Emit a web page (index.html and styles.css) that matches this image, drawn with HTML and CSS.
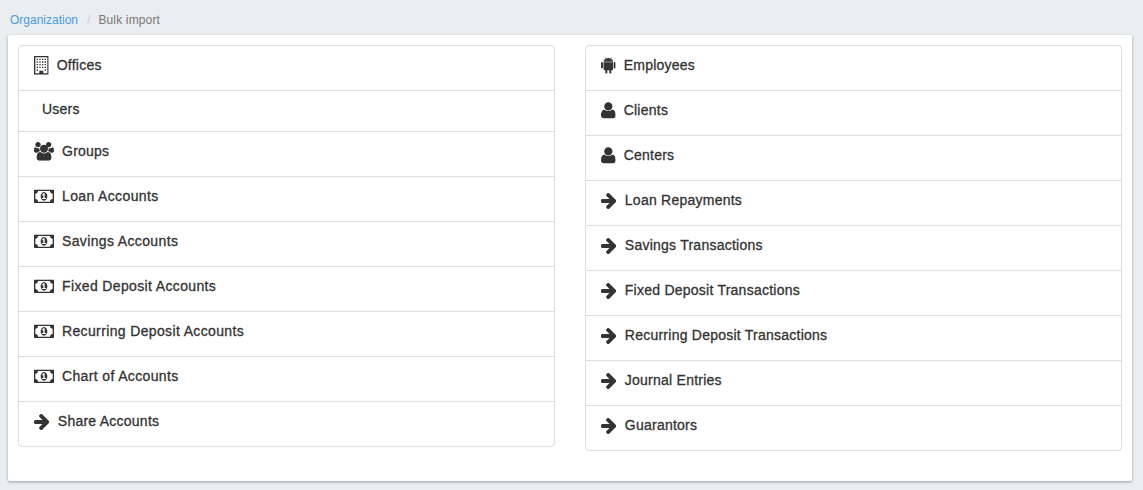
FILE: index.html
```html
<!DOCTYPE html>
<html lang="en">
<head>
<meta charset="utf-8">
<title>Bulk import</title>
<link rel="stylesheet" href="styles.css">
</head>
<body>
<svg class="sprite" aria-hidden="true">
  <symbol id="building" viewBox="0 0 1408 1792"><path fill-rule="evenodd" d="M64 0h1280q26 0 45 19t19 45v1664q0 26-19 45t-45 19H64q-26 0-45-19t-19-45V64q0-26 19-45t45-19zM128 128v1536h384v-224q0-13 9.500-22.500t22.500-9.500h320q13 0 22.500 9.500t9.500 22.500v224h384V128z"/><path d="M256 256h128v128H256zM512 256h128v128H512zM768 256h128v128H768zM1024 256h128v128h-128zM256 512h128v128H256zM512 512h128v128H512zM768 512h128v128H768zM1024 512h128v128h-128zM256 768h128v128H256zM512 768h128v128H512zM768 768h128v128H768zM1024 768h128v128h-128zM256 1024h128v128H256zM512 1024h128v128H512zM768 1024h128v128H768zM1024 1024h128v128h-128zM256 1280h128v128H256zM1024 1280h128v128h-128z"/></symbol>
  <symbol id="users" viewBox="0 0 1920 1792"><path d="M593 896q-162 5-265 128h-134q-82 0-138-40.500t-56-118.500q0-353 124-353 6 0 43.500 21t97.500 42.500 119 21.500q67 0 133-23-5 37-5 66 0 139 81 256zm1071 637q0 120-73 189.500t-194 69.500h-874q-121 0-194-69.500t-73-189.500q0-53 3.500-103.500t14-109 26.500-108.500 43-97.500 62-81 85.500-53.500 111.500-20q10 0 43 21.500t73 48 107 48 135 21.500 135-21.500 107-48 73-48 43-21.500q61 0 111.500 20t85.500 53.500 62 81 43 97.500 26.500 108.500 14 109 3.500 103.500zm-1024-1277q0 106-75 181t-181 75-181-75-75-181 75-181 181-75 181 75 75 181zm704 384q0 159-112.500 271.500t-271.500 112.500-271.500-112.500-112.500-271.500 112.500-271.500 271.500-112.500 271.500 112.500 112.500 271.500zm576 225q0 78-56 118.500t-138 40.500h-134q-103-123-265-128 81-117 81-256 0-29-5-66 66 23 133 23 59 0 119-21.500t97.500-42.500 43.500-21q124 0 124 353zm-256-609q0 106-75 181t-181 75-181-75-75-181 75-181 181-75 181 75 75 181z"/></symbol>
  <symbol id="money" viewBox="0 0 1920 1792"><path d="M768 1152h384v-96h-128v-448h-114l-148 137 77 80q42-37 55-57h2v288h-128v96zm512-256q0 70-21 142t-59.500 134-101.500 101-138 39-138-39-101.500-101-59.500-134-21-142 21-142 59.500-134 101.500-101 138-39 138 39 101.500 101 59.500 134 21 142zm512 256v-512q-106 0-181-75t-75-181h-1152q0 106-75 181t-181 75v512q106 0 181 75t75 181h1152q0-106 75-181t181-75zm128-832v1152q0 26-19 45t-45 19h-1792q-26 0-45-19t-19-45v-1152q0-26 19-45t45-19h1792q26 0 45 19t19 45z" fill-rule="evenodd"/></symbol>
  <symbol id="arrow" viewBox="0 0 1472 1792"><path d="M1472 960q0 54-37 91l-651 651q-39 37-91 37-51 0-90-37l-75-75q-38-38-38-91t38-91l293-293h-704q-52 0-84.500-37.500t-32.500-90.500v-128q0-53 32.500-90.500t84.500-37.500h704l-293-294q-38-36-38-90t38-90l75-75q38-38 90-38 53 0 91 38l651 651q37 35 37 90z"/></symbol>
  <symbol id="user" viewBox="0 0 1408 1792"><path d="M1408 1405q0 120-73 189.500t-194 69.500H267q-121 0-194-69.500T0 1405q0-53 3.500-103.500t14-109T44 1084t43-97.500 62-81 85.500-53.500T346 832q10 0 43 21.500t73 48 107 48T704 971t135-21.500 107-48 73-48 43-21.500q61 0 111.500 20t85.500 53.500 62 81 43 97.500 26.500 108.500 14 109 3.500 103.500zM1104 512q0 164-117 281T704 912 421 793 304 512t117-283T704 112t283 117 117 283z"/></symbol>
  <symbol id="android" viewBox="0 0 1408 1792"><path fill-rule="evenodd" d="M243 557q0-190 212-306L384 120q-10-22 8-30 14-6 22 8l73 132q103-46 217-46t217 46l73-132q8-14 22-8 18 8 8 30l-71 131q212 116 212 306zM493 429a39 39 0 1 0 0-78 39 39 0 0 0 0 78zm422 0a39 39 0 1 0 0-78 39 39 0 0 0 0 78z"/><path d="M247 606h914v666q0 100-100 100h-73v227q0 93-93 93t-93-93v-227H606v227q0 93-93 93t-93-93v-227h-72q-101 0-101-100zM93 587q93 0 93 93v430q0 93-93 93t-93-93V680q0-93 93-93zM1315 587q93 0 93 93v430q0 93-93 93t-93-93V680q0-93 93-93z"/></symbol>
</svg>
<nav class="breadcrumb"><a class="crumb-link">Organization</a><span class="divider">/</span><span class="current">Bulk import</span></nav>
<main class="panel">
  <div class="list">
    <a class="item"><svg class="icon narrow"><use href="#building"/></svg><span>Offices</span></a>
    <a class="item plain"><span>Users</span></a>
    <a class="item"><svg class="icon wide"><use href="#users"/></svg><span>Groups</span></a>
    <a class="item account"><svg class="icon wide"><use href="#money"/></svg><span>Loan Accounts</span></a>
    <a class="item account"><svg class="icon wide"><use href="#money"/></svg><span>Savings Accounts</span></a>
    <a class="item account"><svg class="icon wide"><use href="#money"/></svg><span>Fixed Deposit Accounts</span></a>
    <a class="item account"><svg class="icon wide"><use href="#money"/></svg><span>Recurring Deposit Accounts</span></a>
    <a class="item account"><svg class="icon wide"><use href="#money"/></svg><span>Chart of Accounts</span></a>
    <a class="item"><svg class="icon arrow"><use href="#arrow"/></svg><span>Share Accounts</span></a>
  </div>
  <div class="list">
    <a class="item"><svg class="icon narrow"><use href="#android"/></svg><span>Employees</span></a>
    <a class="item"><svg class="icon narrow"><use href="#user"/></svg><span>Clients</span></a>
    <a class="item"><svg class="icon narrow"><use href="#user"/></svg><span>Centers</span></a>
    <a class="item"><svg class="icon arrow"><use href="#arrow"/></svg><span>Loan Repayments</span></a>
    <a class="item"><svg class="icon arrow"><use href="#arrow"/></svg><span>Savings Transactions</span></a>
    <a class="item"><svg class="icon arrow"><use href="#arrow"/></svg><span>Fixed Deposit Transactions</span></a>
    <a class="item"><svg class="icon arrow"><use href="#arrow"/></svg><span>Recurring Deposit Transactions</span></a>
    <a class="item"><svg class="icon arrow"><use href="#arrow"/></svg><span>Journal Entries</span></a>
    <a class="item"><svg class="icon arrow"><use href="#arrow"/></svg><span>Guarantors</span></a>
  </div>
</main>
</body>
</html>
```

FILE: styles.css
```css
* { box-sizing: border-box; }
body {
  margin: 0;
  height: 490px;
  overflow: hidden;
  background: #eaeef1;
  color: #333;
  font-family: "Liberation Sans", Arial, sans-serif;
}
.sprite { display: none; }
.breadcrumb {
  display: flex;
  height: 35px;
  padding: 12px 10px 0;
  font-size: 12px;
  line-height: 16px;
  color: #777;
}
.crumb-link { color: #4a9ae0; }
.divider { padding: 0 8px 0 9px; color: #ccc; }
.current { letter-spacing: .15px; }
.panel {
  display: grid;
  grid-template-columns: 537px 537px;
  column-gap: 30px;
  align-items: start;
  width: 1124px;
  height: 446px;
  margin-left: 8px;
  padding: 10px;
  background: #fff;
  border-radius: 2px;
  box-shadow: 0 1px 3px rgba(0, 0, 0, .35);
}
.list { border: 1px solid #ddd; border-radius: 4px; }
.item {
  display: flex;
  gap: 8px;
  height: 45px;
  padding: 9px 15px;
  border-bottom: 1px solid #ddd;
  font-size: 14px;
  line-height: 20px;
  letter-spacing: .24px;
  -webkit-text-stroke: .3px #333;
}
.account { letter-spacing: .36px; }
.item:last-child { height: 44px; border-bottom: 0; }
.plain { height: 41px; padding: 8px 23px; }
.icon { height: 18.67px; margin-top: 1.3px; fill: #333; -webkit-text-stroke: 0; }
.narrow { width: 14.67px; }
.wide { width: 20px; }
.arrow { width: 15.33px; }
.arrow + span { margin-left: .5px; }
```
